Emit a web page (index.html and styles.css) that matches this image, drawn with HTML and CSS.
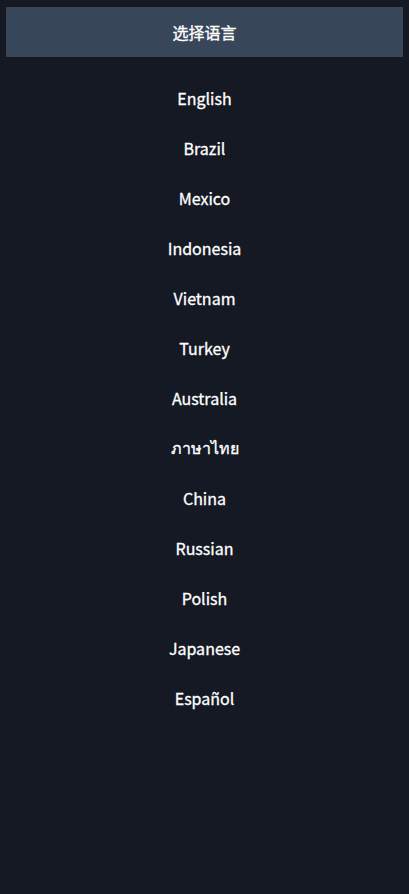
FILE: index.html
```html
<!DOCTYPE html>
<html lang="zh-CN">
<head>
    <meta charset="UTF-8">
    <meta name="viewport" content="width=device-width, initial-scale=1.0">
    <title>选择语言</title>
    <link rel="stylesheet" href="styles.css">
</head>
<body>
    <div class="page">
        <div class="title-bar">选择语言</div>
        <ul class="lang-list">
            <li>English</li>
            <li>Brazil</li>
            <li>Mexico</li>
            <li>Indonesia</li>
            <li>Vietnam</li>
            <li>Turkey</li>
            <li>Australia</li>
            <li>ภาษาไทย</li>
            <li>China</li>
            <li>Russian</li>
            <li>Polish</li>
            <li>Japanese</li>
            <li>Español</li>
        </ul>
    </div>
</body>
</html>
```

FILE: styles.css
```css
html, body {
  margin: 0;
  height: 100%;
  background-color: #151924;
}

body {
  font-family: "Noto Sans CJK SC", "Noto Sans", sans-serif;
  color: #ffffff;
}

.page {
  padding: 7px 6px;
}

.title-bar {
  height: 50px;
  display: flex;
  align-items: center;
  justify-content: center;
  background-color: #374659;
  font-size: 16px;
  -webkit-text-stroke: 0.3px #ffffff;
}

.lang-list {
  list-style: none;
  margin: 0;
  padding: 16px 0 0;
}

.lang-list li {
  height: 50px;
  display: flex;
  align-items: center;
  justify-content: center;
  font-size: 16px;
  -webkit-text-stroke: 0.3px #ffffff;
  cursor: pointer;
}
```
